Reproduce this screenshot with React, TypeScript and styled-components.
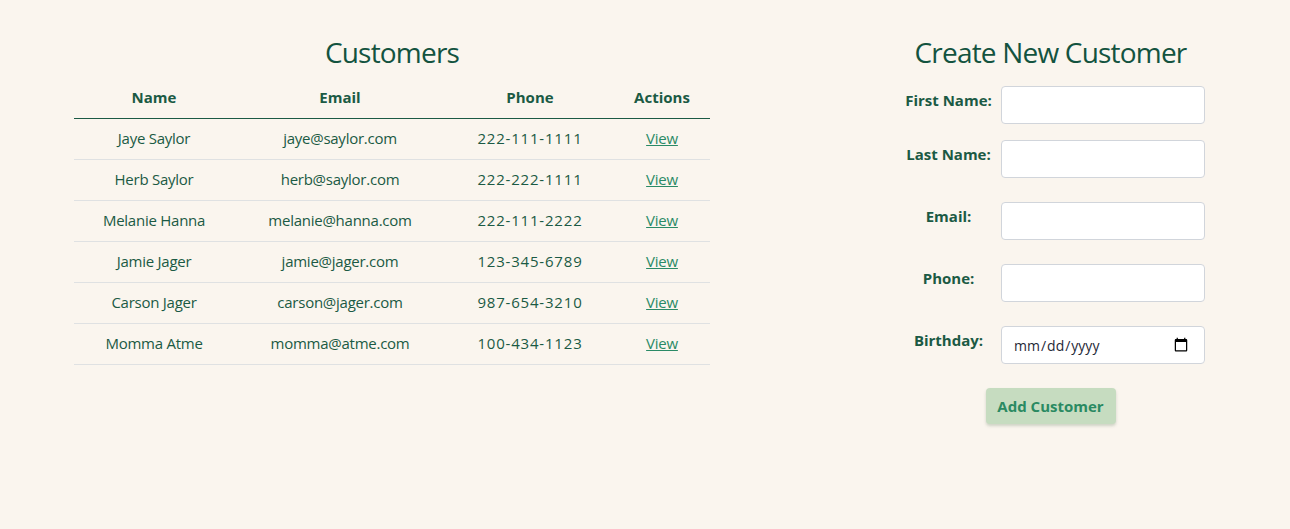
import React, { useState } from 'react'
import styled, { createGlobalStyle } from 'styled-components'

const GlobalStyle = createGlobalStyle`
    body {
        margin: 0;
        background: #faf5ee;
        font-family: 'Open Sans', 'Liberation Sans', sans-serif;
        color: #1b5a44;
    }
`

const customers = [
    { name: 'Jaye Saylor', email: 'jaye@saylor.com', phone: '222-111-1111' },
    { name: 'Herb Saylor', email: 'herb@saylor.com', phone: '222-222-1111' },
    { name: 'Melanie Hanna', email: 'melanie@hanna.com', phone: '222-111-2222' },
    { name: 'Jamie Jager', email: 'jamie@jager.com', phone: '123-345-6789' },
    { name: 'Carson Jager', email: 'carson@jager.com', phone: '987-654-3210' },
    { name: 'Momma Atme', email: 'momma@atme.com', phone: '100-434-1123' },
]

const Page = styled.div`
    display: flex;
    align-items: flex-start;
    padding: 34px 0 0 74px;
    min-height: 529px;
    box-sizing: border-box;
`

const ListSection = styled.section`
    width: 636px;
`

const FormSection = styled.section`
    width: 309px;
    margin-left: 186px;
`

const Title = styled.h2<{ $space: number }>`
    margin: 0 0 ${(p) => p.$space}px;
    text-align: center;
    font-size: 28px;
    font-weight: 400;
    letter-spacing: -0.8px;
    line-height: 36px;
    color: #13533f;
`

const Table = styled.table`
    width: 100%;
    border-collapse: collapse;
`

const HeadCell = styled.th`
    padding: 9px 0 10px;
    font-size: 15px;
    font-weight: 700;
    line-height: 22px;
    border-bottom: 1px solid #1b5a44;
    text-align: center;
`

const Cell = styled.td<{ $w: number; $digits?: boolean }>`
    padding: 9px 0 11px;
    font-size: 15px;
    letter-spacing: ${(p) => (p.$digits ? '0.8px' : '-0.25px')};
    line-height: 20px;
    text-align: center;
    border-bottom: 1px solid #dfe1e2;
    width: ${(p) => p.$w}px;
`

const ViewLink = styled.a`
    color: #2a8a66;
    text-decoration: underline;
    cursor: pointer;
`

const Form = styled.form`
    display: flex;
    flex-direction: column;
`

const Row = styled.div<{ $gap: number }>`
    display: grid;
    grid-template-columns: 105px 204px;
    align-items: start;
    margin-top: ${(p) => p.$gap}px;
`

const Label = styled.label`
    text-align: center;
    font-size: 15px;
    font-weight: 700;
    line-height: 20px;
    padding-top: 4px;
`

const Input = styled.input`
    box-sizing: border-box;
    width: 204px;
    height: 38px;
    border: 1px solid #d1d5db;
    border-radius: 4px;
    background: #fff;
    padding: 0 15px 0 11px;
    font-family: 'Open Sans', sans-serif;
    font-size: 14px;
    color: #1f2937;

    &::-webkit-calendar-picker-indicator {
        width: 16px;
        height: 16px;
        padding: 0;
        cursor: pointer;
    }
`

const SubmitButton = styled.button`
    align-self: center;
    margin-top: 24px;
    width: 130px;
    height: 36px;
    border: none;
    border-radius: 4px;
    background: #c6dcc0;
    color: #2a8a62;
    font-family: inherit;
    font-size: 15px;
    font-weight: 700;
    box-shadow: 0 2px 3px rgba(80, 110, 80, 0.25);
    cursor: pointer;
`

const fields = [
    { label: 'First Name:', type: 'text', gap: 0 },
    { label: 'Last Name:', type: 'text', gap: 16 },
    { label: 'Email:', type: 'email', gap: 24 },
    { label: 'Phone:', type: 'tel', gap: 24 },
    { label: 'Birthday:', type: 'date', gap: 24 },
]

export default function App() {
    const [values, setValues] = useState<Record<string, string>>({})

    return (
        <>
            <GlobalStyle />
            <Page>
                <ListSection>
                    <Title $space={7}>Customers</Title>
                    <Table>
                        <thead>
                            <tr>
                                <HeadCell>Name</HeadCell>
                                <HeadCell>Email</HeadCell>
                                <HeadCell>Phone</HeadCell>
                                <HeadCell>Actions</HeadCell>
                            </tr>
                        </thead>
                        <tbody>
                            {customers.map((c) => (
                                <tr key={c.email}>
                                    <Cell $w={160}>{c.name}</Cell>
                                    <Cell $w={212}>{c.email}</Cell>
                                    <Cell $w={168} $digits>
                                        {c.phone}
                                    </Cell>
                                    <Cell $w={96}>
                                        <ViewLink>View</ViewLink>
                                    </Cell>
                                </tr>
                            ))}
                        </tbody>
                    </Table>
                </ListSection>

                <FormSection>
                    <Title $space={16}>Create New Customer</Title>
                    <Form onSubmit={(e) => e.preventDefault()}>
                        {fields.map((f) => (
                            <Row key={f.label} $gap={f.gap}>
                                <Label>{f.label}</Label>
                                <Input
                                    type={f.type}
                                    value={values[f.label] || ''}
                                    onChange={(e) => setValues({ ...values, [f.label]: e.target.value })}
                                />
                            </Row>
                        ))}
                        <SubmitButton type="submit">Add Customer</SubmitButton>
                    </Form>
                </FormSection>
            </Page>
        </>
    )
}
